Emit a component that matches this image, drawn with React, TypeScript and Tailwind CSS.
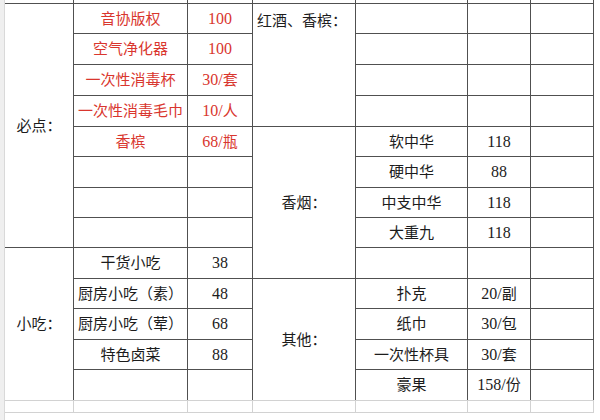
import React from 'react';

type Cell = {
  t?: string;
  span?: string;
  red?: boolean;
  top?: boolean;
};

// one array per sheet row, cells in reading order; merged cells carry a row-span
const rows: Cell[][] = [
  [
    { t: '必点：', span: 'row-span-8' },
    { t: '音协版权', red: true },
    { t: '100', red: true },
    { t: '红酒、香槟：', span: 'row-span-4', top: true },
    {},
    {},
    {},
  ],
  [{ t: '空气净化器', red: true }, { t: '100', red: true }, {}, {}, {}],
  [{ t: '一次性消毒杯', red: true }, { t: '30/套', red: true }, {}, {}, {}],
  [{ t: '一次性消毒毛巾', red: true }, { t: '10/人', red: true }, {}, {}, {}],
  [
    { t: '香槟', red: true },
    { t: '68/瓶', red: true },
    { t: '香烟：', span: 'row-span-5' },
    { t: '软中华' },
    { t: '118' },
    {},
  ],
  [{}, {}, { t: '硬中华' }, { t: '88' }, {}],
  [{}, {}, { t: '中支中华' }, { t: '118' }, {}],
  [{}, {}, { t: '大重九' }, { t: '118' }, {}],
  [{ t: '小吃：', span: 'row-span-5' }, { t: '干货小吃' }, { t: '38' }, {}, {}, {}],
  [
    { t: '厨房小吃（素）' },
    { t: '48' },
    { t: '其他：', span: 'row-span-4' },
    { t: '扑克' },
    { t: '20/副' },
    {},
  ],
  [{ t: '厨房小吃（荤）' }, { t: '68' }, { t: '纸巾' }, { t: '30/包' }, {}],
  [{ t: '特色卤菜' }, { t: '88' }, { t: '一次性杯具' }, { t: '30/套' }, {}],
  [{}, {}, { t: '豪果' }, { t: '158/份' }, {}],
];

const cols = 'grid-cols-[68px_113px_64px_102px_111px_62px_62px]';

// digits and slash run a touch larger than the CJK glyphs in the sheet
function Text({ t }: { t: string }) {
  const parts = t.match(/[0-9/]+|[^0-9/]+/g) ?? [];
  return (
    <>
      {parts.map((p, i) =>
        /[0-9/]/.test(p) ? (
          <span key={i} className="text-[16px]">
            {p}
          </span>
        ) : (
          <span key={i}>{p}</span>
        )
      )}
    </>
  );
}

export default function App() {
  return (
    <div
      className="w-[600px] h-[420px] overflow-hidden bg-white flex text-[15px] text-[#1c1c1c]"
      style={{ fontFamily: '"Liberation Serif", "Noto Sans CJK SC", serif' }}
    >
      {/* row header edge */}
      <div className="w-[5px] h-full bg-[#efefef] border-r border-[#d9d9d9]" />

      <div className="flex flex-col">
        <div
          className={`grid ${cols} grid-rows-[3px_29px_30px_30px_30px_29px_30px_29px_29px_30px_29px_30px_29px_30px] gap-px pr-px bg-[#505050] w-fit`}
        >
          {/* partial row above the visible area */}
          {Array.from({ length: 7 }).map((_, i) => (
            <div key={`p${i}`} className="bg-white" />
          ))}

          {rows.map((row, r) =>
            row.map((c, i) => (
              <div
                key={`${r}-${i}`}
                className={[
                  'bg-white flex leading-[20px] whitespace-nowrap',
                  c.span ?? '',
                  c.top ? 'items-start justify-start pl-[4px] pt-[7px]' : 'items-center justify-center',
                  c.red ? 'text-[#d9362e]' : '',
                ].join(' ')}
              >
                {c.t && <Text t={c.t} />}
              </div>
            ))
          )}
        </div>

        {/* sheet grid lines below the bordered table */}
        <div className={`grid ${cols} grid-rows-[11px] gap-px py-px pr-px bg-[#d2d2d2] w-fit`}>
          {Array.from({ length: 7 }).map((_, i) => (
            <div key={`b${i}`} className="bg-white" />
          ))}
        </div>
      </div>
    </div>
  );
}
